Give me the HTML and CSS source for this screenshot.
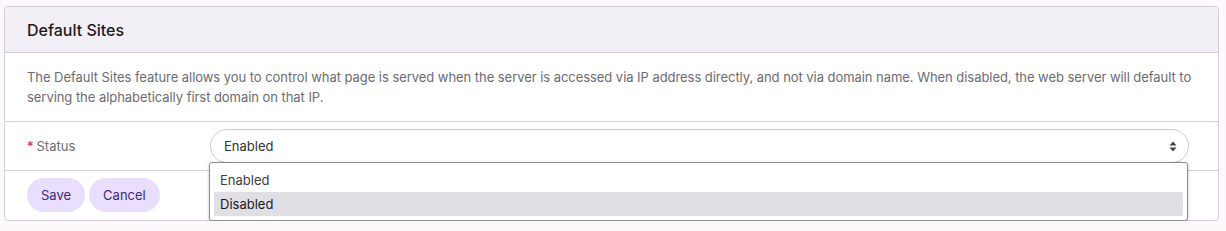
FILE: index.html
```html
<!DOCTYPE html>
<html lang="en">
<head>
    <meta charset="UTF-8">
    <meta name="viewport" content="width=device-width, initial-scale=1.0">
    <title>Default Sites</title>
    <link rel="stylesheet" href="styles.css">
</head>
<body>
    <div class="card">
        <div class="card-header">Default Sites</div>
        <div class="card-desc">
            The Default Sites feature allows you to control what page is served when the server is accessed via IP address directly, and not via domain name. When disabled, the web server will default to serving the alphabetically first domain on that IP.
        </div>
        <div class="form-row">
            <label class="label"><span class="req">*</span>Status</label>
            <div class="select-wrap">
                <div class="select">
                    <span>Enabled</span>
                    <svg class="arrows" width="8" height="11" viewBox="0 0 8 11">
                        <path d="M4 0.5 L7.5 4.5 H0.5 Z" fill="#444"/>
                        <path d="M4 10.5 L7.5 6.5 H0.5 Z" fill="#444"/>
                    </svg>
                </div>
                <div class="dropdown">
                    <div class="option">Enabled</div>
                    <div class="option selected">Disabled</div>
                </div>
            </div>
        </div>
        <div class="card-footer">
            <button class="btn">Save</button>
            <button class="btn">Cancel</button>
        </div>
    </div>
</body>
</html>
```

FILE: styles.css
```css
body {
    margin: 0;
    padding: 6px 7px 0 4px;
    background: #fcf8fc;
    font-family: Inter, "Noto Sans", sans-serif;
    color: #212529;
}

.card {
    background: #fff;
    border: 1px solid #d3ced8;
    border-radius: 4px;
}

.card-header {
    height: 45px;
    display: flex;
    align-items: center;
    padding: 0 22px;
    background: #f3eff6;
    border-bottom: 1px solid #d3ced8;
    border-radius: 4px 4px 0 0;
    font-size: 16px;
    font-weight: 500;
    color: #1d1a22;
}

.card-desc {
    padding: 14px 20px 14px 22px;
    font-size: 13px;
    line-height: 20px;
    letter-spacing: -0.05px;
    color: #6c6b73;
    border-bottom: 1px solid #d3ced8;
}

.form-row {
    display: grid;
    grid-template-columns: 183px 1fr;
    align-items: center;
    padding: 7px 29px 7px 22px;
    border-bottom: 1px solid #d3ced8;
}

.label {
    font-size: 13px;
    color: #6c6b73;
}

.req {
    color: #d11a2a;
    margin-right: 3px;
}

.select-wrap {
    position: relative;
}

.select {
    height: 32px;
    border: 1px solid #cfcbd3;
    border-radius: 17px;
    display: flex;
    align-items: center;
    justify-content: space-between;
    padding: 0 11px 0 13px;
    font-size: 13px;
    color: #333;
}

.arrows {
    display: block;
}

.dropdown {
    position: absolute;
    top: 33px;
    left: -1px;
    right: 1px;
    background: #fff;
    border: 1px solid #8e8e8e;
    border-radius: 3px;
    box-shadow: 0 1px 3px rgba(0, 0, 0, 0.25);
    padding: 5px 4px 4px 4px;
    z-index: 10;
}

.option {
    height: 24px;
    line-height: 24px;
    padding: 0 6px;
    font-size: 13px;
    color: #3c3c42;
    border-radius: 2px;
}

.option.selected {
    background: #e0dfe4;
    color: #1a1a1e;
}

.card-footer {
    display: flex;
    gap: 4px;
    padding: 7px 22px 8px 22px;
}

.btn {
    height: 34px;
    padding: 0 14px;
    border: none;
    border-radius: 17px;
    background: #e9defd;
    color: #3d2b7a;
    font-family: Inter, "Noto Sans", sans-serif;
    font-size: 13px;
    cursor: pointer;
}
```
